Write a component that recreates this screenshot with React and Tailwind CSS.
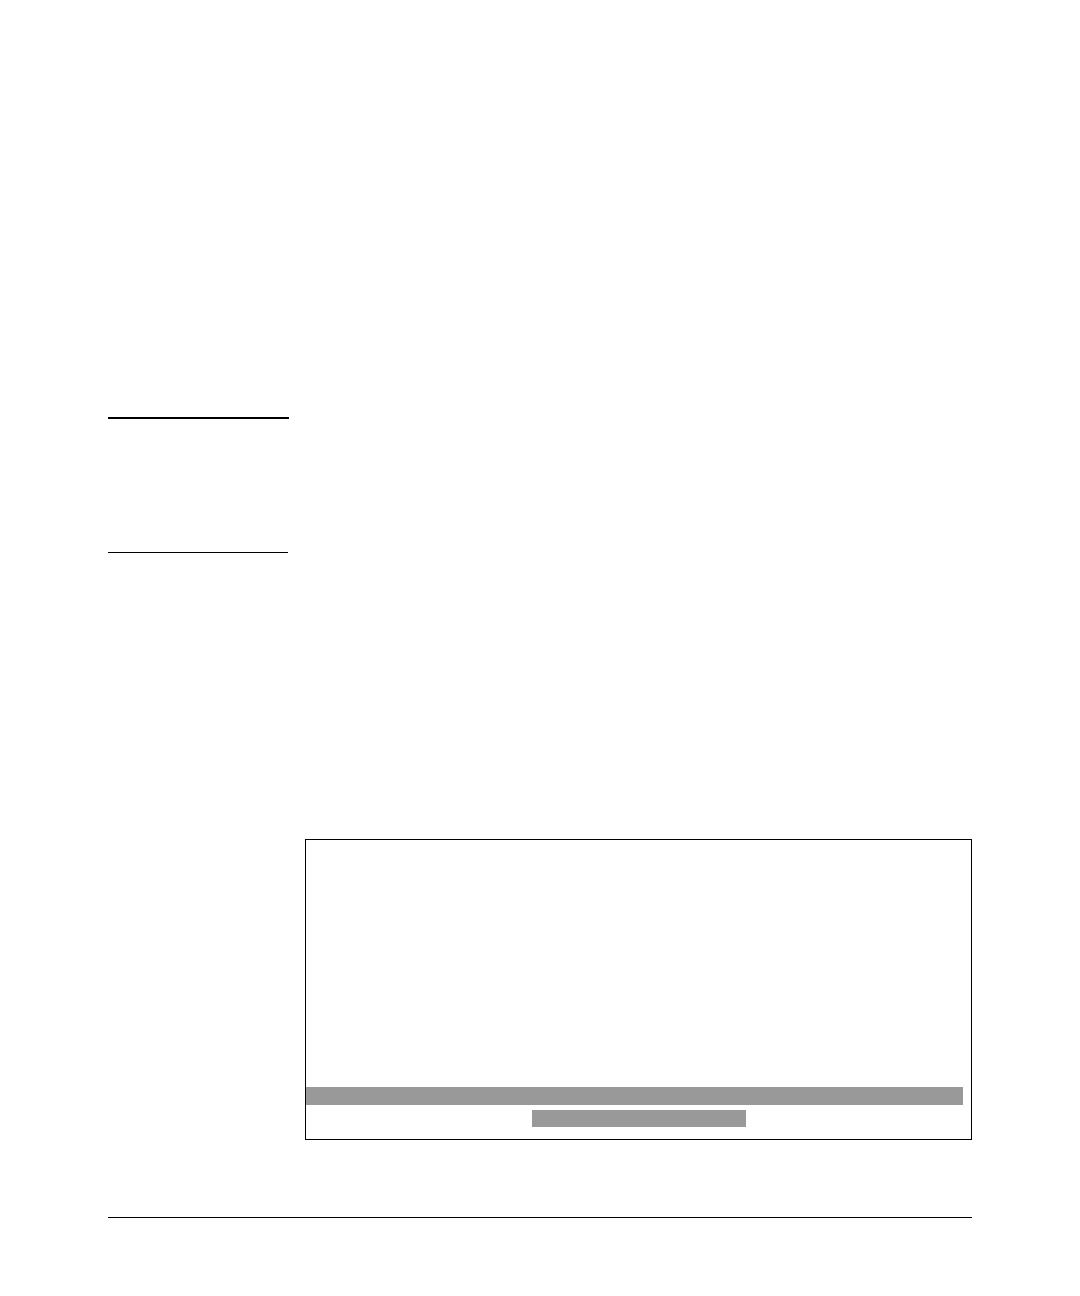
import React from 'react';

export default function App() {
  return (
    <main className="min-h-screen bg-white px-[108px] pt-[417px] font-['Liberation_Sans',sans-serif]">
      {/* Side note, ruled above and below */}
      <aside className="w-[181px]">
        <hr className="border-0 h-[2px] bg-black" />
        <div className="h-[133px]" />
        <hr className="border-0 h-px bg-black mr-px" />
      </aside>

      {/* Console screen */}
      <section className="mt-[286px] ml-[197px] border border-black">
        <div className="h-[247px]" />
        <div className="h-[18px] mr-2 bg-[#999999]" />
        <div className="mt-[5px] mb-3 flex justify-center">
          <div className="h-[17px] w-[214px] bg-[#999999]" />
        </div>
      </section>

      {/* Footer rule */}
      <footer className="mt-[77px] border-t border-black" />
    </main>
  );
}
